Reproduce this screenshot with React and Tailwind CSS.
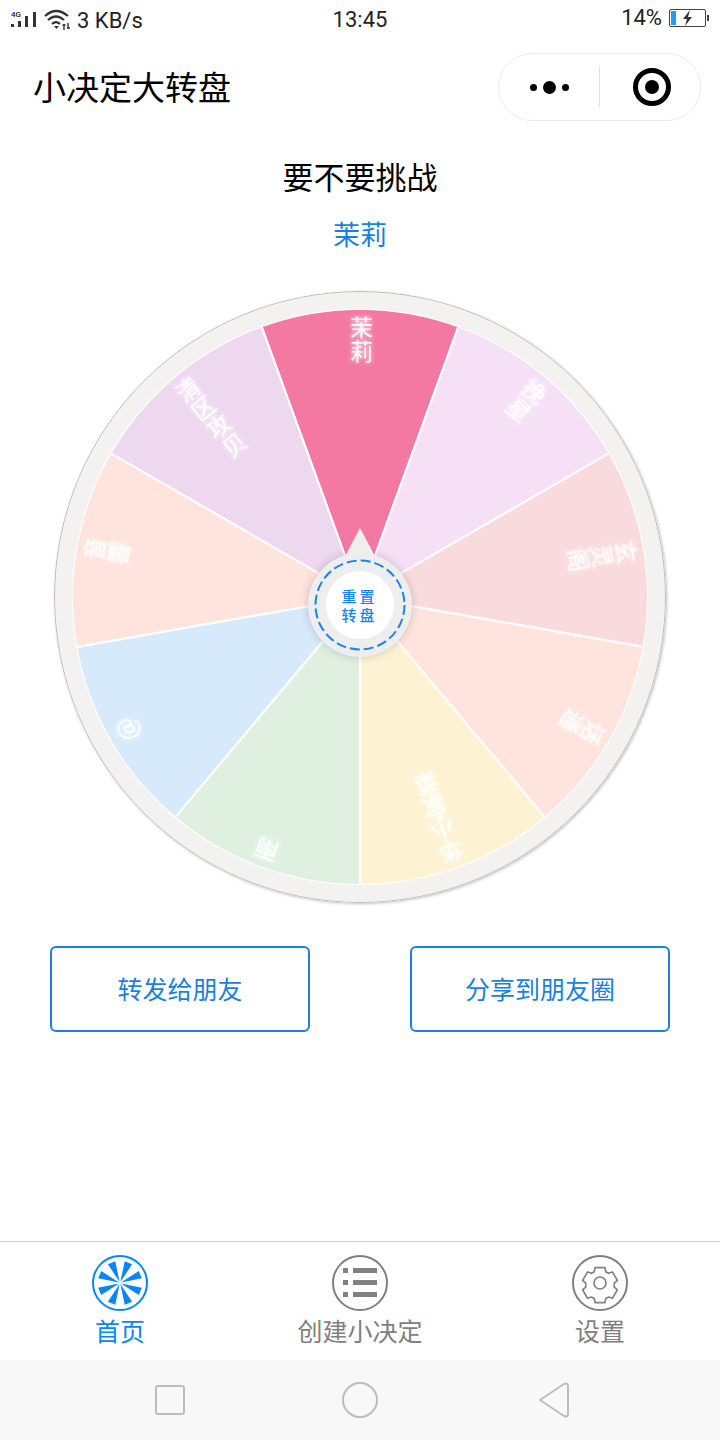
const CJK = "font-['Noto_Sans_CJK_SC','Liberation_Sans',sans-serif]";

const cx = 306;
const cy = 306;
const outer = 288;

const sectors = [
  { color: '#f379a3', label: '茉莉' },
  { color: '#f5e0f6', label: '挽星' },
  { color: '#fadbdd', label: '玄灵阁' },
  { color: '#fee4dc', label: '话通' },
  { color: '#fdf3d3', label: '华小家菜' },
  { color: '#dff0e1', label: '雨' },
  { color: '#d7eafc', label: '@' },
  { color: '#fee4dc', label: '音響' },
  { color: '#eed8f0', label: '清区攻贝' },
];

function polar(r, deg) {
  const a = ((deg - 90) * Math.PI) / 180;
  return [cx + r * Math.cos(a), cy + r * Math.sin(a)];
}

function Wheel() {
  return (
    <svg width="612" height="612" viewBox="0 0 612 612" className="block rounded-full shadow-[1px_1px_3px_rgba(0,0,0,0.25)]">
      <circle cx={cx} cy={cy} r="306" fill="#f3f2f1" />
      {sectors.map((s, i) => {
        const start = i * 40 - 20;
        const end = i * 40 + 20;
        const [x1, y1] = polar(outer, start);
        const [x2, y2] = polar(outer, end);
        return (
          <path
            key={i}
            d={`M${cx} ${cy} L${x1} ${y1} A${outer} ${outer} 0 0 1 ${x2} ${y2} Z`}
            fill={s.color}
            stroke="#fff"
            strokeWidth="2"
          />
        );
      })}
      <circle cx={cx} cy={cy} r={outer + 8.5} fill="none" stroke="#f3f2f1" strokeWidth="17" />
      <circle cx={cx} cy={cy} r="305.5" fill="none" stroke="#bdbbb8" strokeWidth="1" />
      {sectors.map((s, i) => (
        <g key={i} transform={`rotate(${i * 40} ${cx} ${cy})`}>
          <text
            x={cx + 1.5}
            y={cy - 281}
            fontSize={s.label === '@' ? 25 : 23}
            letterSpacing="1"
            fill="#fff"
            fontFamily="'Noto Sans CJK SC', 'Liberation Sans', sans-serif"
            className="[writing-mode:vertical-rl] [text-orientation:upright] drop-shadow-[0_0_2px_rgba(255,255,255,0.9)]"
          >
            {s.label}
          </text>
        </g>
      ))}
    </svg>
  );
}

function CenterButton() {
  return (
    <div className="absolute left-1/2 top-[calc(50%+8px)] w-[104px] h-[104px] -translate-x-1/2 -translate-y-1/2 rounded-full bg-[#eeeeee] shadow-[0_0_10px_rgba(0,0,0,0.18)] flex items-center justify-center">
      <div className="absolute left-1/2 -top-[25px] -translate-x-1/2 w-0 h-0 border-l-[16px] border-r-[16px] border-b-[30px] border-l-transparent border-r-transparent border-b-[#eeeeee]" />
      <svg width="92" height="92" viewBox="0 0 92 92" className="absolute left-[6px] top-[6px]">
        <circle cx="46" cy="46" r="44.5" fill="none" stroke="#1a84f0" strokeWidth="2" strokeDasharray="10 4" />
      </svg>
      <div className="relative w-[68px] h-[68px] rounded-full bg-white flex flex-col items-center justify-center text-[15px] leading-[19px] font-medium text-[#1a84f0]">
        <span className="tracking-[3px] pr-[1px]">重置</span>
        <span className="tracking-[3px] pr-[1px]">转盘</span>
      </div>
    </div>
  );
}

function HomeIcon() {
  return (
    <svg width="56" height="56" viewBox="0 0 56 56">
      <circle cx="28" cy="28" r="27" fill="none" stroke="#0a84ff" strokeWidth="2" />
      {[0, 1, 2, 3, 4, 5, 6, 7].map((i) => (
        <path key={i} d="M28 27 L24 6 L32 6 Z" fill="#0a84ff" transform={`rotate(${i * 45 + 22.5} 28 28)`} />
      ))}
    </svg>
  );
}

function ListIcon() {
  return (
    <svg width="56" height="56" viewBox="0 0 56 56">
      <circle cx="28" cy="28" r="27" fill="none" stroke="#808080" strokeWidth="2" />
      <path d="M11 13h5v5h-5zM21 13h24v5H21zM11 25h5v5h-5zM21 25h24v5H21zM11 37h5v5h-5zM21 37h24v5H21z" fill="#808080" />
    </svg>
  );
}

function GearIcon() {
  return (
    <svg width="56" height="56" viewBox="0 0 56 56">
      <circle cx="28" cy="28" r="27" fill="none" stroke="#808080" strokeWidth="2" />
      <g transform="translate(11.2 11.2) scale(1.4)" fill="none" stroke="#808080" strokeWidth="1.2" strokeLinejoin="round">
        <path d="M8.5 1.5h7l.6 2.9 2 1.1 2.8-.9 3.5 6-2.2 2v2.8l2.2 2-3.5 6-2.8-.9-2 1.1-.6 2.9h-7l-.6-2.9-2-1.1-2.8.9-3.5-6 2.2-2v-2.8l-2.2-2 3.5-6 2.8.9 2-1.1z" transform="translate(0 -.5)" />
        <circle cx="12" cy="12" r="4.3" />
      </g>
    </svg>
  );
}

export default function App() {
  return (
    <div className={`w-[720px] h-[1440px] bg-white flex flex-col text-black overflow-hidden ${CJK}`}>
      {/* status bar */}
      <div className="h-[40px] flex items-center justify-between pl-[11px] pr-[11px] text-[#222] text-[22px] font-['Roboto',sans-serif]">
        <div className="flex items-center w-[240px]">
          <svg width="28" height="20" viewBox="0 0 28 20">
            <text x="0" y="7" fontSize="8" fontFamily="Roboto" fontWeight="500" fill="#222">4G</text>
            <path d="M0 14h3v3H0zM7 11h3v6H7zM14 6h3v11h-3zM22 2h3v15h-3z" fill="#333" />
          </svg>
          <svg width="28" height="22" viewBox="0 0 28 22" className="ml-[5px]">
            <path d="M1 7 Q12 -3 24 7 M4 11 Q12 4 20 11 M8 15 Q12 11 16 15" fill="none" stroke="#333" strokeWidth="2.2" />
            <path d="M10 17h5l-2.5 3z" fill="#333" />
            <path d="M20 15v6M24 14v6M18.5 16h3M23 19h3" stroke="#333" strokeWidth="1.4" />
          </svg>
          <span className="ml-[5px]">3 KB/s</span>
        </div>
        <span className="-mt-[1px]">13:45</span>
        <div className="flex items-center justify-end w-[240px] -mt-[5px]">
          <span>14%</span>
          <div className="ml-[7px] w-[37px] h-[18px] rounded-[2px] border border-[#444] relative p-[1px] flex items-center">
            <div className="w-[5px] h-[14px] bg-[#1e9bff]" />
            <svg width="12" height="16" viewBox="0 0 12 16" className="absolute left-[12px] top-0">
              <path d="M8 0 L1 9h4l-2 7 7-9H6z" fill="#333" />
            </svg>
          </div>
          <div className="w-[2px] h-[6px] bg-[#444] ml-[1px]" />
        </div>
      </div>

      {/* title bar */}
      <div className="h-[94px] flex items-center justify-between pl-[33px] pr-[19px]">
        <h1 className="text-[33px] leading-none font-normal pb-[2px]">小决定大转盘</h1>
        <div className="w-[203px] h-[68px] rounded-full border border-[#ebebeb] flex items-center">
          <div className="w-[100px] flex items-center justify-center gap-[6px]">
            <span className="w-[7px] h-[7px] rounded-full bg-black" />
            <span className="w-[13px] h-[13px] rounded-full bg-black" />
            <span className="w-[7px] h-[7px] rounded-full bg-black" />
          </div>
          <div className="w-px h-[40px] bg-[#e0e0e0]" />
          <div className="flex-1 flex items-center justify-center pl-[3px]">
            <div className="w-[38px] h-[38px] rounded-full border-[5px] border-black flex items-center justify-center">
              <span className="w-[14px] h-[14px] rounded-full bg-black" />
            </div>
          </div>
        </div>
      </div>

      {/* heading */}
      <div className="mt-[19px] text-center text-[31px] leading-[46px]">要不要挑战</div>
      <div className="mt-[16px] text-center text-[27px] leading-[38px] text-[#1a7fe0]">茉莉</div>

      {/* wheel */}
      <div className="mt-[38px] flex justify-center">
        <div className="relative w-[612px] h-[612px]">
          <Wheel />
          <CenterButton />
        </div>
      </div>

      {/* share buttons */}
      <div className="mt-[43px] px-[50px] flex justify-between">
        <button className="w-[260px] h-[86px] rounded-[6px] border-2 border-[#1a7fe0] text-[#1a7fe0] text-[25px]">转发给朋友</button>
        <button className="w-[260px] h-[86px] rounded-[6px] border-2 border-[#1a7fe0] text-[#1a7fe0] text-[25px]">分享到朋友圈</button>
      </div>

      <div className="flex-1" />

      {/* tab bar */}
      <div className="h-[119px] border-t border-[#cfcfcf] grid grid-cols-3 pt-[13px]">
        <div className="flex flex-col items-center text-[#0a84ff]">
          <HomeIcon />
          <span className="text-[25px] leading-[34px] mt-[2px]">首页</span>
        </div>
        <div className="flex flex-col items-center text-[#808080]">
          <ListIcon />
          <span className="text-[25px] leading-[34px] mt-[2px]">创建小决定</span>
        </div>
        <div className="flex flex-col items-center text-[#808080]">
          <GearIcon />
          <span className="text-[25px] leading-[34px] mt-[2px]">设置</span>
        </div>
      </div>

      {/* android nav */}
      <div className="h-[80px] bg-[#f8f8f8] flex items-center pl-[155px]">
        <div className="w-[30px] h-[30px] rounded-[3px] border-2 border-[#bcbcbc]" />
        <div className="ml-[157px] w-[36px] h-[36px] rounded-full border-2 border-[#bcbcbc]" />
        <svg width="32" height="36" viewBox="0 0 32 36" className="ml-[160px]">
          <path d="M2 18 L26 2 Q30 0.5 30 4 V32 Q30 35.5 26 34 Z" fill="none" stroke="#bcbcbc" strokeWidth="2" strokeLinejoin="round" />
        </svg>
      </div>
    </div>
  );
}
